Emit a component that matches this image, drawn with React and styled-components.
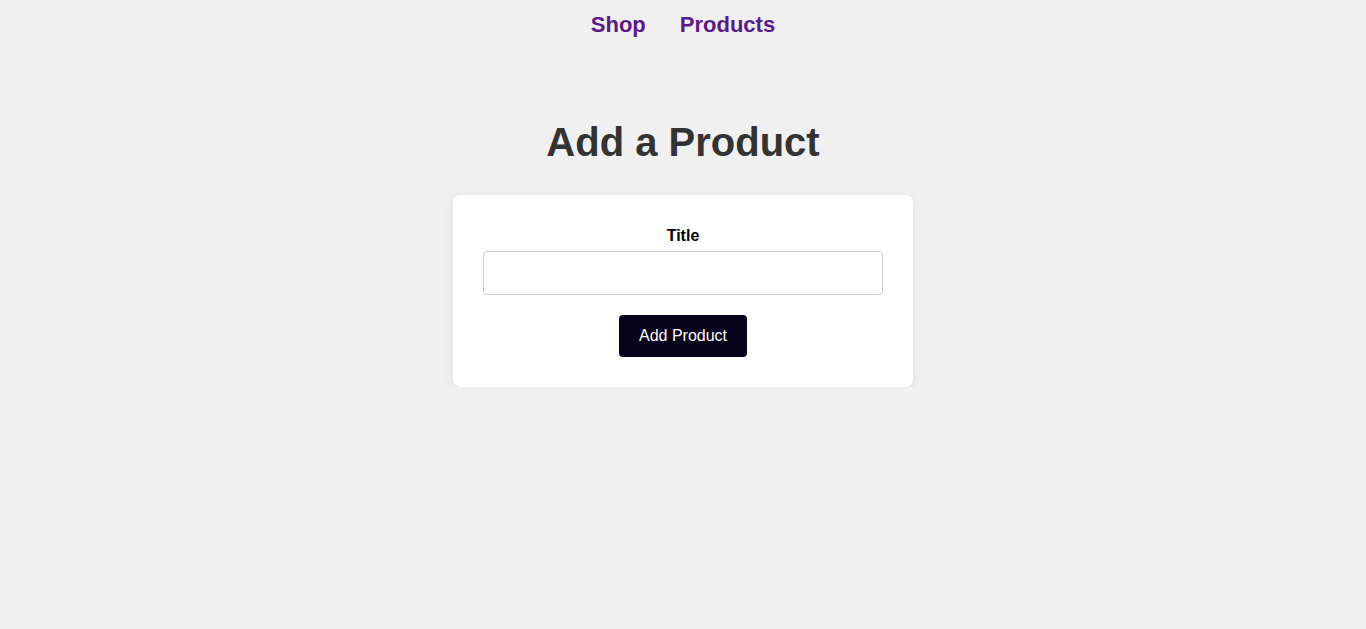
import styled, { createGlobalStyle } from "styled-components";

const GlobalStyle = createGlobalStyle`
  body {
    margin: 0;
    background-color: #f0f0f0;
    font-family: "Liberation Sans", Arial, sans-serif;
  }
`;

const Nav = styled.nav`
  display: flex;
  justify-content: center;
  gap: 34px;
  padding: 12px 0 0;
`;

const NavLink = styled.a`
  font-size: 22px;
  font-weight: 700;
  color: #5a1a8a;
  text-decoration: none;
  line-height: 26px;
`;

const Main = styled.main`
  display: flex;
  flex-direction: column;
  align-items: center;
`;

const Heading = styled.h1`
  font-size: 40px;
  color: #333;
  margin: 81px 0 30px;
  line-height: 46px;
`;

const Card = styled.form`
  width: 460px;
  box-sizing: border-box;
  background: #fff;
  border-radius: 8px;
  padding: 32px 30px 30px;
  box-shadow: 0 3px 12px rgba(0, 0, 0, 0.08);
  display: flex;
  flex-direction: column;
  align-items: center;
`;

const Label = styled.label`
  font-size: 16px;
  font-weight: 700;
  color: #000;
  line-height: 18px;
  margin-bottom: 6px;
`;

const Input = styled.input`
  width: 100%;
  height: 44px;
  box-sizing: border-box;
  border: 1px solid #ccc;
  border-radius: 4px;
  font-size: 16px;
  padding: 0 10px;
  margin-bottom: 20px;
`;

const Button = styled.button`
  background-color: #08041c;
  color: #fff;
  border: none;
  border-radius: 4px;
  font-family: "Liberation Sans", Arial, sans-serif;
  font-size: 16px;
  line-height: 18px;
  padding: 12px 20px;
  cursor: pointer;
`;

function App() {
  return (
    <>
      <GlobalStyle />
      <Nav>
        <NavLink href="#">Shop</NavLink>
        <NavLink href="#">Products</NavLink>
      </Nav>
      <Main>
        <Heading>Add a Product</Heading>
        <Card onSubmit={(e) => e.preventDefault()}>
          <Label htmlFor="title">Title</Label>
          <Input id="title" type="text" />
          <Button type="submit">Add Product</Button>
        </Card>
      </Main>
    </>
  );
}

export default App;
